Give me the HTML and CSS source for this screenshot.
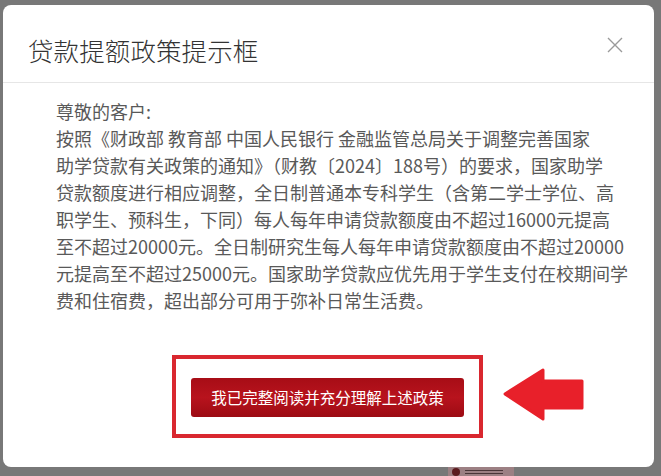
FILE: index.html
```html
<!DOCTYPE html>
<html lang="zh-CN">
<head>
<meta charset="utf-8">
<title>贷款提额政策提示框</title>
<link rel="stylesheet" href="styles.css">
</head>
<body>
<div class="page">
  <div class="modal">
    <div class="modal-header">
      <h1 class="modal-title">贷款提额政策提示框</h1>
      <span class="close" aria-label="关闭">
        <svg width="16" height="16" viewBox="0 0 16 16"><path d="M1 1 L15 15 M15 1 L1 15" stroke="#9a9a9a" stroke-width="1.4" fill="none"/></svg>
      </span>
    </div>
    <div class="modal-body">
      <p class="notice">尊敬的客户:<br>按照《财政部 教育部 中国人民银行 金融监管总局关于调整完善国家<br>助学贷款有关政策的通知》（财教〔2024〕188号）的要求，国家助学<br>贷款额度进行相应调整，全日制普通本专科学生（含第二学士学位、高<br>职学生、预科生，下同）每人每年申请贷款额度由不超过16000元提高<br>至不超过20000元。全日制研究生每人每年申请贷款额度由不超过20000<br>元提高至不超过25000元。国家助学贷款应优先用于学生支付在校期间学<br>费和住宿费，超出部分可用于弥补日常生活费。</p>
    </div>
    <div class="modal-footer">
      <div class="highlight-box">
        <button class="confirm-btn" type="button">我已完整阅读并充分理解上述政策</button>
      </div>
      <svg class="arrow" width="90" height="60" viewBox="0 0 90 60">
        <path d="M5 29 L43 5 L43 16 L82 16 L82 43 L43 43 L43 54 Z" fill="#e8202a" stroke="#e8202a" stroke-width="3" stroke-linejoin="round"/>
      </svg>
    </div>
  </div>
  <div class="peek">
    <span class="peek-dot"></span>
    <span class="peek-lines"><i></i><i></i></span>
  </div>
</div>
</body>
</html>
```

FILE: styles.css
```css
html, body {
  margin: 0;
  padding: 0;
  background: #787878;
  height: 100%;
  overflow: hidden;
}

.page {
  padding: 5px 0 0 3px;
  font-family: "Noto Sans CJK SC", "Noto Sans", "Liberation Sans", sans-serif;
}

.modal {
  width: 651px;
  height: 462px;
  background: #ffffff;
  border-radius: 8px;
  display: flex;
  flex-direction: column;
  box-sizing: border-box;
}

.modal-header {
  display: flex;
  justify-content: space-between;
  align-items: flex-start;
  height: 78px;
  box-sizing: border-box;
  padding: 32px 31px 0 25px;
  border-bottom: 1px solid #e6e6e6;
}

.modal-title {
  margin: 0;
  font-size: 25.5px;
  line-height: 26px;
  font-weight: 300;
  color: #333333;
  letter-spacing: 0.1px;
}

.close {
  display: block;
  width: 16px;
  height: 16px;
  margin-top: 0;
}

.close svg {
  display: block;
}

.modal-body {
  padding: 15px 0 0 53px;
}

.notice {
  margin: 0;
  font-size: 18px;
  line-height: 27px;
  color: #595959;
  white-space: nowrap;
}

.modal-footer {
  position: relative;
  margin-top: 41px;
  display: flex;
  justify-content: center;
}

.highlight-box {
  width: 311px;
  height: 83px;
  box-sizing: border-box;
  border: 4px solid #d9272f;
  display: flex;
  align-items: center;
  justify-content: center;
  margin-left: -2px;
}

.confirm-btn {
  width: 273px;
  height: 39px;
  border: none;
  border-radius: 3px;
  background: linear-gradient(180deg, #a70d16 0%, #b8131d 50%, #9c0b13 100%);
  color: #ffffff;
  font-family: "Noto Sans CJK SC", "Noto Sans", sans-serif;
  font-size: 15.5px;
  letter-spacing: 0;
  padding: 0;
  margin-top: 1px;
  cursor: pointer;
}

.arrow {
  position: absolute;
  left: 497px;
  top: 10px;
}

.peek {
  margin-left: 445px;
  width: 66px;
  height: 9px;
  background: #9c8083;
  display: flex;
  align-items: center;
  gap: 5px;
  padding-left: 4px;
  box-sizing: border-box;
}

.peek-dot {
  width: 8px;
  height: 8px;
  border-radius: 50%;
  background: #5c1a1e;
}

.peek-lines {
  display: flex;
  flex-direction: column;
  gap: 2px;
}

.peek-lines i {
  display: block;
  width: 38px;
  height: 1px;
  background: #4a3638;
}
```
